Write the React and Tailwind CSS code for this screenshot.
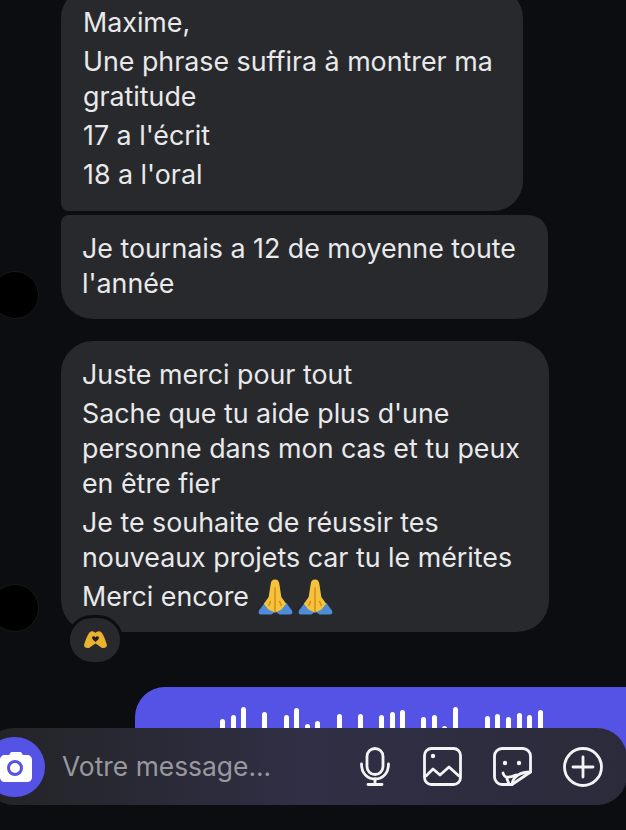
import React from 'react';

const WAVE = [10, 14, 22, 0, 17, 0, 14, 21, 5, 8, 0, 15, 0, 15, 0, 14, 17, 19, 0, 12, 14, 3, 22, 0, 0, 13, 15, 12, 16, 14, 19];

function PrayHands({ className }) {
  return (
    <svg viewBox="0 0 36 36" className={className}>
      <path d="M7 24 L1 32 C0 35 1 36 3 36 L14 36 L18 33 L22 36 L33 36 C35 36 36 35 35 32 L29 24 L18 30 Z" fill="#4f8bd6" />
      <path d="M17.5 0 C14.5 0 13.5 2 13 5 L11 18 L6 25 L11 31 L17.5 34 L24 31 L29 25 L24 18 L22 5 C21.5 2 20.5 0 17.5 0 Z" fill="#f5c33b" />
      <path d="M17.5 8 L17.5 34 M13 22 L11 27 M22 22 L24 27" stroke="#d4871c" strokeWidth="1.4" fill="none" />
    </svg>
  );
}

function HeartHands({ className }) {
  return (
    <svg viewBox="0 0 23 18" className={className}>
      <path d="M7 0.5 C9 0 10.5 1 11.5 2 C12.5 1 14 0 16 0.5 C19 1.5 21 8 23 14 C23 16 21 17.5 18 17 L14.5 14.5 L11.5 12.5 L8.5 14.5 L5 17 C2 17.5 0 16 0 14 C2 8 4 1.5 7 0.5 Z" fill="#eab22e" />
      <path d="M11.5 11 C9 9 7.5 7.5 8.2 6 C9 4.8 10.7 4.8 11.5 6.4 C12.3 4.8 14 4.8 14.8 6 C15.5 7.5 14 9 11.5 11 Z" fill="#1f2024" />
    </svg>
  );
}

function MicIcon() {
  return (
    <svg viewBox="0 0 30 39" className="h-[39px] w-[30px]" fill="none" stroke="currentColor" strokeWidth="2.8" strokeLinecap="round">
      <rect x="7" y="1.5" width="16" height="26" rx="8" />
      <path d="M1.5 17 C1.5 26 7 32 15 32 C23 32 28.5 26 28.5 17" />
      <path d="M15 32 V37 M8 37.5 H22" />
    </svg>
  );
}

function ImageIcon() {
  return (
    <svg viewBox="0 0 39 39" className="h-[39px] w-[39px]" fill="none" stroke="currentColor" strokeWidth="2.8" strokeLinejoin="round" strokeLinecap="round">
      <rect x="1.5" y="1.5" width="36" height="36" rx="7" />
      <circle cx="10" cy="9" r="2.2" fill="currentColor" stroke="none" />
      <path d="M3 29 L10 22 L17 28 L26 20 L36 29" />
    </svg>
  );
}

function StickerIcon() {
  return (
    <svg viewBox="0 0 39 39" className="h-[39px] w-[39px]" fill="none" stroke="currentColor" strokeWidth="2.8" strokeLinejoin="round" strokeLinecap="round">
      <path d="M19 37.5 H9 C5 37.5 1.5 34 1.5 30 V9 C1.5 5 5 1.5 9 1.5 H30 C34 1.5 37.5 5 37.5 9 V25 Z" />
      <circle cx="12" cy="16" r="2.2" fill="currentColor" stroke="none" />
      <circle cx="26" cy="16" r="2.2" fill="currentColor" stroke="none" />
      <path d="M10 26 C11 30 14 32 23 28 M14 32 L16 37" />
      <path d="M37.5 25 C28 25 20 29 19 37.5" />
    </svg>
  );
}

function PlusIcon() {
  return (
    <svg viewBox="0 0 40 40" className="h-10 w-10" fill="none" stroke="currentColor" strokeWidth="2.8" strokeLinecap="round">
      <circle cx="20" cy="20" r="18.5" />
      <path d="M20 10 V30 M10 20 H30" />
    </svg>
  );
}

function CameraIcon() {
  return (
    <svg viewBox="0 0 32 31" className="h-[31px] w-8">
      <path d="M5 4 H9 L11 1 H21 L23 4 H27 C30 4 32 6 32 9 V26 C32 29 30 31 27 31 H5 C2 31 0 29 0 26 V9 C0 6 2 4 5 4 Z" fill="#fff" />
      <circle cx="15" cy="17" r="6.5" fill="none" stroke="#5552e6" strokeWidth="3" />
    </svg>
  );
}

export default function App() {
  return (
    <div className="relative h-[830px] w-[626px] overflow-hidden bg-[#0c0d11] text-[26.8px] leading-[35px] text-[#e9e9eb]" style={{ fontFamily: 'Inter, "Noto Sans", sans-serif' }}>
      <div className="flex flex-col pl-[61px] -mt-[12px]">
        {/* first bubble */}
        <div className="flex w-[462px] flex-col gap-1 rounded-t-[30px] rounded-br-[30px] rounded-bl-lg bg-[#28292c] pl-[22px] pr-4 pt-[17px] pb-[19px]">
          <p>Maxime,</p>
          <p>Une phrase suffira à montrer ma gratitude</p>
          <p>17 a l'écrit</p>
          <p>18 a l'oral</p>
        </div>

        {/* second bubble with avatar */}
        <div className="relative mt-1 w-[487px] rounded-t-[20px] rounded-tl-lg rounded-b-[32px] bg-[#28292c] pl-[21px] pr-4 pt-[16px] pb-[18px]">
          <div className="absolute -left-[70px] bottom-0 h-12 w-12 rounded-full border border-[#17181c] bg-black" />
          <p>Je tournais a 12 de moyenne toute l'année</p>
        </div>

        {/* third bubble */}
        <div className="relative mt-[22px] flex w-[488px] flex-col gap-1 rounded-[32px] bg-[#28292c] pl-[21px] pr-4 pt-[16px] pb-[18px]">
          <div className="absolute -left-[70px] bottom-0 h-12 w-12 rounded-full border border-[#17181c] bg-black" />
          <p>Juste merci pour tout</p>
          <p>Sache que tu aide plus d'une personne dans mon cas et tu peux en être fier</p>
          <p>Je te souhaite de réussir tes nouveaux projets car tu le mérites</p>
          <p className="flex h-[35px] items-center gap-[9px]">
            Merci encore
            <span className="flex gap-[5px]">
              <PrayHands className="h-[36px] w-[35px]" />
              <PrayHands className="h-[36px] w-[35px]" />
            </span>
          </p>
          <div className="absolute -bottom-[33px] left-[6px] flex h-[50px] w-[56px] items-center justify-center rounded-full border-[3px] border-[#0c0d11] bg-[#28292c]">
            <HeartHands className="h-[18px] w-[23px]" />
          </div>
        </div>

        {/* outgoing audio message, runs under the input bar */}
        <div className="mt-[55px] -mr-10 ml-[74px] h-[90px] rounded-[30px] bg-[#5552e6] pl-[85px] pt-[21px]">
          <div className="flex h-[21px] items-end gap-[5.6px]">
            {WAVE.map((h, i) => (
              <span key={i} className="w-[5px] rounded-t-full bg-white" style={{ height: h }} />
            ))}
          </div>
        </div>
      </div>

      {/* input bar */}
      <div className="absolute -left-4 -right-px top-[728px] flex h-[77px] items-center rounded-[30px] bg-gradient-to-r from-[#232326] via-[#302f45] to-[#2b2b3b] text-white">
        <div className="flex h-[60px] w-[61px] shrink-0 items-center justify-center rounded-full bg-[#5552e6] pl-[3px]">
          <CameraIcon />
        </div>
        <span className="ml-[17px] w-[298px] text-[26.4px] text-[#98989e]">Votre message...</span>
        <div className="text-[#f4f4f6]"><MicIcon /></div>
        <div className="ml-[33px] text-[#f4f4f6]"><ImageIcon /></div>
        <div className="ml-[31px] text-[#f4f4f6]"><StickerIcon /></div>
        <div className="ml-[31px] text-[#f4f4f6]"><PlusIcon /></div>
      </div>
    </div>
  );
}
